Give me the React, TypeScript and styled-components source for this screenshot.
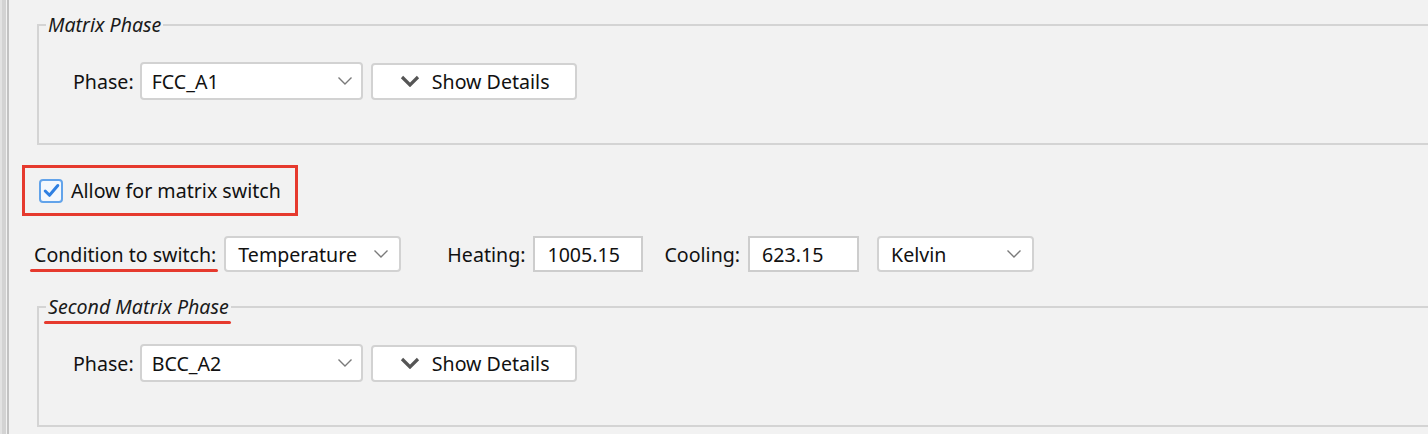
import React from 'react'
import styled, { createGlobalStyle } from 'styled-components'

const GlobalStyle = createGlobalStyle`
  html, body {
    margin: 0;
    padding: 0;
    background: #f2f2f2;
    overflow: hidden;
  }
  body {
    font-family: 'Noto Sans', 'Open Sans', sans-serif;
    font-size: 19.6px;
    color: #111;
  }
`

const Page = styled.div`
  display: flex;
  width: 1428px;
  height: 434px;
`

const Rail = styled.div`
  width: 9px;
  flex: none;
  background: linear-gradient(
    to right,
    #e2e2e2 0 2px,
    #d3d3d3 2px 6px,
    #f2f2f2 6px 7px,
    #c2c2c2 7px 9px
  );
`

const Content = styled.div`
  flex: 1;
  display: flex;
  flex-direction: column;
  min-width: 0;
`

const GroupBox = styled.fieldset<{ $top: number; $bottom: number }>`
  margin: ${({ $top }) => $top}px -40px 0 28px;
  padding: 24px 0 ${({ $bottom }) => $bottom}px 7px;
  border: 2px solid #d4d4d4;
  min-width: 0;
`

const Legend = styled.legend`
  padding: 0 2px;
  font-style: italic;
  line-height: 26px;
  color: #1a1a1a;
`

const Marked = styled.span`
  position: relative;
  &::after {
    content: '';
    position: absolute;
    left: -4px;
    right: -2px;
    bottom: -4px;
    height: 3px;
    border-radius: 2px;
    background: #e63a2e;
  }
`

const PhaseRow = styled.div`
  display: flex;
  align-items: center;
  margin-left: 27px;
`

const Label = styled.span<{ $space?: number }>`
  white-space: nowrap;
  margin-right: ${({ $space }) => $space ?? 8}px;
`

const Combo = styled.div<{ $width: number }>`
  box-sizing: border-box;
  width: ${({ $width }) => $width}px;
  height: 38px;
  display: flex;
  align-items: center;
  justify-content: space-between;
  padding: 0 8px 0 10px;
  background: #fff;
  border: 2px solid #d2d2d2;
  border-radius: 4px;
`

const Button = styled.div`
  box-sizing: border-box;
  width: 206px;
  height: 37px;
  margin-left: 8px;
  display: flex;
  align-items: center;
  justify-content: center;
  gap: 12px;
  padding-left: 2px;
  background: #fff;
  border: 2px solid #d2d2d2;
  border-radius: 4px;
`

const CheckFrame = styled.div`
  align-self: flex-start;
  box-sizing: border-box;
  margin: 20px 0 0 13px;
  height: 51px;
  width: 276px;
  display: flex;
  align-items: center;
  gap: 8px;
  padding-left: 14px;
  border: 3px solid #e63a2e;
`

const CheckBox = styled.span`
  box-sizing: border-box;
  width: 24px;
  height: 24px;
  display: flex;
  align-items: center;
  justify-content: center;
  border: 2px solid #62a3ea;
  border-radius: 4px;
  background: #f4f8fd;
`

const SwitchRow = styled.div`
  display: flex;
  align-items: center;
  margin: 20px 0 0 25px;
  height: 36px;
`

const Field = styled.div<{ $gap?: number }>`
  display: flex;
  align-items: center;
  margin-left: ${({ $gap }) => $gap ?? 0}px;
`

const TextBox = styled.div<{ $width: number }>`
  box-sizing: border-box;
  width: ${({ $width }) => $width}px;
  height: 36px;
  display: flex;
  align-items: center;
  padding-left: 12px;
  background: #fff;
  border: 2px solid #cdcdcd;
`

const SmallCombo = styled(Combo)`
  height: 36px;
  padding: 0 10px 0 12px;
`

const ComboArrow = () => (
  <svg width="16" height="10" viewBox="0 0 16 10">
    <path d="M1.5 1.5 L8 8 L14.5 1.5" fill="none" stroke="#7a7a7a" strokeWidth="1.4" />
  </svg>
)

const BoldArrow = () => (
  <svg width="20" height="12" viewBox="0 0 20 12">
    <path d="M2 2 L10 10 L18 2" fill="none" stroke="#555" strokeWidth="3.2" strokeLinejoin="miter" />
  </svg>
)

const Check = () => (
  <svg width="17" height="15" viewBox="0 0 17 15">
    <path d="M2.2 8 L6.5 12.3 L14.8 2.5" fill="none" stroke="#2f80e2" strokeWidth="3" strokeLinecap="round" strokeLinejoin="round" />
  </svg>
)

function PhaseLine({ phase }: { phase: string }) {
  return (
    <PhaseRow>
      <Label $space={6}>Phase:</Label>
      <Combo $width={223}>
        {phase}
        <ComboArrow />
      </Combo>
      <Button>
        <BoldArrow />
        Show Details
      </Button>
    </PhaseRow>
  )
}

export default function App() {
  return (
    <>
      <GlobalStyle />
      <Page>
        <Rail />
        <Content>
          <GroupBox $top={12} $bottom={43}>
            <Legend>Matrix Phase</Legend>
            <PhaseLine phase="FCC_A1" />
          </GroupBox>

          <CheckFrame>
            <CheckBox>
              <Check />
            </CheckBox>
            Allow for matrix switch
          </CheckFrame>

          <SwitchRow>
            <Field>
              <Label>
                <Marked>Condition to switch:</Marked>
              </Label>
              <SmallCombo $width={177}>
                Temperature
                <ComboArrow />
              </SmallCombo>
            </Field>
            <Field $gap={46}>
              <Label>Heating:</Label>
              <TextBox $width={110}>1005.15</TextBox>
            </Field>
            <Field $gap={21}>
              <Label>Cooling:</Label>
              <TextBox $width={111}>623.15</TextBox>
            </Field>
            <Field $gap={18}>
              <SmallCombo $width={157}>
                Kelvin
                <ComboArrow />
              </SmallCombo>
            </Field>
          </SwitchRow>

          <GroupBox $top={22} $bottom={43}>
            <Legend>
              <Marked>Second Matrix Phase</Marked>
            </Legend>
            <PhaseLine phase="BCC_A2" />
          </GroupBox>
        </Content>
      </Page>
    </>
  )
}
